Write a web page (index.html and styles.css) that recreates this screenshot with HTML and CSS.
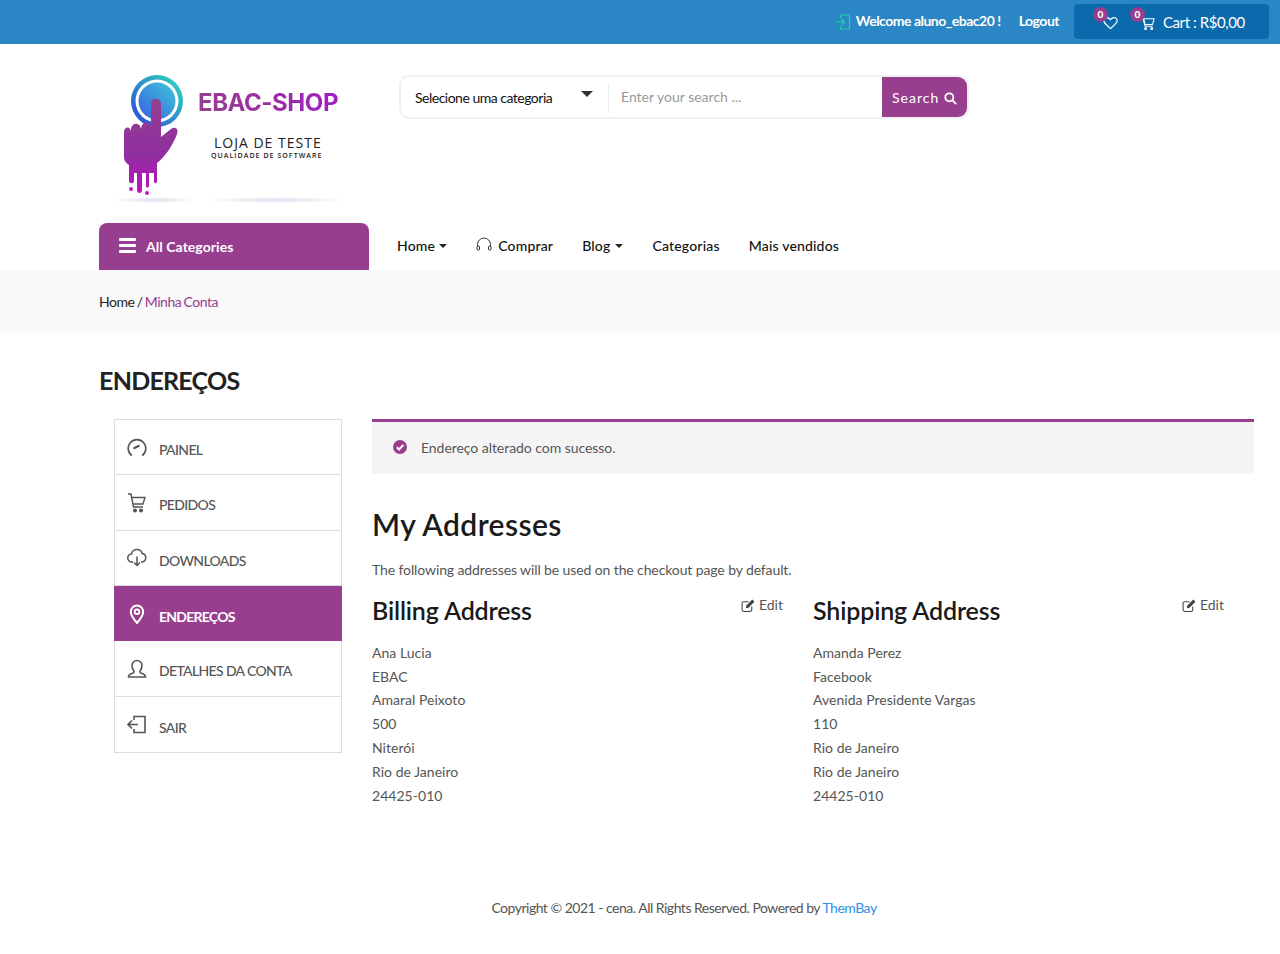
FILE: index.html
```html
<!DOCTYPE html>
<html lang="pt">

<head>
    <meta charset="utf-8">
    <title>Minha Conta - EBAC-SHOP</title>
    <link rel="stylesheet" href="styles.css">
</head>

<body>
    <div class="topbar">
        <svg class="welcome-icon" width="16" height="16" viewBox="0 0 16 16" fill="none" stroke="#1fd1a8" stroke-width="1.2">
            <path d="M5.5 4V1h9v14h-9v-3" />
            <path d="M1 8h8M6.5 5.2 9.500 8l-3 2.800" />
        </svg>
        <a class="welcome" href="#">Welcome aluno_ebac20 !</a>
        <a class="logout" href="#">Logout</a>
        <div class="cart-box">
            <div class="cart-item wish">
                <span class="count">0</span>
                <svg width="15" height="14" viewBox="0 0 15 14" fill="none" stroke="#fff" stroke-width="1.2">
                    <path d="M7.5 12.600 1.900 7.200C.3 5.600.6 3.200 2.200 2.100c1.600-1 3.600-.6 5.300 1.500 1.700-2.100 3.700-2.500 5.300-1.500 1.600 1.100 1.900 3.500.3 5.100z" />
                </svg>
            </div>
            <div class="cart-item">
                <span class="count">0</span>
                <svg width="15" height="15" viewBox="0 0 16 15" fill="none" stroke="#fff" stroke-width="1.1">
                    <path d="M15 2.500H4l1.400 6h8zM.5 1h2.300l2.600 9.500h8.100" />
                    <circle cx="6" cy="13" r="1" fill="#fff" />
                    <circle cx="12.500" cy="13" r="1" fill="#fff" />
                </svg>
            </div>
            <span class="cart-text">Cart : R$0,00</span>
        </div>
    </div>

    <div class="container">
        <div class="header">
            <div class="logo">
                <svg class="logo-mark" width="90" height="134" viewBox="0 0 90 134">
                    <defs>
                        <linearGradient id="ring" x1="0" y1="1" x2="1" y2="0">
                            <stop offset="0" stop-color="#2b3fe0" />
                            <stop offset="1" stop-color="#2fe0b8" />
                        </linearGradient>
                        <linearGradient id="disc" x1="0" y1="1" x2="1" y2="0">
                            <stop offset="0" stop-color="#3a5fe0" />
                            <stop offset="1" stop-color="#3cc8d8" />
                        </linearGradient>
                        <linearGradient id="hand" x1="0" y1="0" x2="0" y2="1">
                            <stop offset="0" stop-color="#973e8e" />
                            <stop offset="0.6" stop-color="#8f2fa0" />
                            <stop offset="1" stop-color="#c010c0" />
                        </linearGradient>
                    </defs>
                    <circle cx="58" cy="32" r="26" fill="url(#ring)" />
                    <circle cx="58" cy="32" r="21.500" fill="#fff" />
                    <circle cx="58" cy="32" r="18.500" fill="url(#disc)" />
                    <path fill="url(#hand)" d="M52 35C52 28 62 28 62 35L62 68 72 60C76 57 80 60 78 65 74 76 66 88 58 94L58 112C58 115 55 115 55 112L55 104 50 104 50 117C50 119 47 119 47 117L47 104 43 104 43 121C43 125 38 125 38 121L38 104 35 104 35 112C35 115 30 115 30 112L30 96C27 94 25 92 25 88L25 63C25 57 32 57 32 63L32 60C33 53 41 53 42 60 43 51 52 52 52 58Z" />
                    <circle cx="32" cy="120" r="2" fill="#c914bd" />
                    <circle cx="48" cy="124" r="2" fill="#c914bd" />
                </svg>
                <div class="logo-text">
                    <div class="logo-name">EBAC-SHOP</div>
                    <div class="logo-sub">LOJA DE TESTE</div>
                    <div class="logo-tag">QUALIDADE DE SOFTWARE</div>
                </div>
                <div class="shadow-a"></div>
                <div class="shadow-b"></div>
            </div>

            <div class="search">
                <div class="search-cat">
                    <span>Selecione uma categoria</span>
                    <i class="caret"></i>
                </div>
                <div class="search-input">Enter your search ...</div>
                <div class="search-btn">
                    Search
                    <svg width="13" height="13" viewBox="0 0 13 13" fill="none" stroke="#fff" stroke-width="1.800">
                        <circle cx="5.300" cy="5.300" r="4" />
                        <path d="M8.200 8.200 12.200 12.200" />
                    </svg>
                </div>
            </div>
        </div>

        <div class="navrow">
            <div class="all-cats">
                <div class="burger"><b></b><b></b><b></b></div>
                All Categories
            </div>
            <ul class="menu">
                <li class="first"><a href="#">Home</a><i class="caret-sm"></i></li>
                <li>
                    <svg class="head-icon" width="16" height="16" viewBox="0 0 16 16" fill="none" stroke="#222" stroke-width="0.9">
                        <path d="M1.500 9.500V7.500a6.500 6.500 0 0 1 13 0v2" />
                        <rect x="1" y="9" width="2.500" height="4" rx="1" />
                        <rect x="12.500" y="9" width="2.500" height="4" rx="1" />
                    </svg>
                    <a href="#">Comprar</a>
                </li>
                <li><a href="#">Blog</a><i class="caret-sm"></i></li>
                <li><a href="#">Categorias</a></li>
                <li><a href="#">Mais vendidos</a></li>
            </ul>
        </div>
    </div>

    <div class="crumbs">
        <div class="container">
            <a href="#">Home</a> / <span class="current">Minha Conta</span>
        </div>
    </div>

    <div class="container">
        <h1 class="page-title">ENDEREÇOS</h1>
    </div>

    <div class="account">
        <ul class="side">
            <li>
                <svg width="20" height="20" viewBox="0 0 20 20" fill="none" stroke="#555" stroke-width="1.600">
                    <path d="M4.800 17.500A8.800 8.800 0 1 1 15.200 17.500" />
                    <path d="M6.500 10.500 12.500 7.500" stroke-width="2" />
                </svg>
                <a href="#">PAINEL</a>
            </li>
            <li>
                <svg width="20" height="20" viewBox="0 0 20 20" fill="none" stroke="#555" stroke-width="1.400">
                    <path d="M1 1h3l2.500 13h9.500M5 4.500h13l-2 6.500H6.500" />
                    <circle cx="8" cy="17.500" r="1.300" fill="#555" />
                    <circle cx="14" cy="17.500" r="1.300" fill="#555" />
                </svg>
                <a href="#">PEDIDOS</a>
            </li>
            <li>
                <svg width="20" height="20" viewBox="0 0 20 20" fill="none" stroke="#555" stroke-width="1.500">
                    <path d="M6 14H5a4 4 0 0 1-.5-8 5.500 5.500 0 0 1 10.700-.5 4.300 4.300 0 0 1-.2 8.500h-1" />
                    <path d="M10 8.500v9M7 14.500l3 3 3-3" />
                </svg>
                <a href="#">DOWNLOADS</a>
            </li>
            <li class="active">
                <svg width="20" height="20" viewBox="0 0 20 20" fill="none" stroke="#fff" stroke-width="2">
                    <path d="M10 19C6 14.500 3.800 11.200 3.800 7.800a6.200 6.200 0 0 1 12.400 0C16.200 11.200 14 14.500 10 19z" />
                    <circle cx="10" cy="7.800" r="2.300" />
                </svg>
                <a href="#">ENDEREÇOS</a>
            </li>
            <li>
                <svg width="20" height="20" viewBox="0 0 20 20" fill="none" stroke="#555" stroke-width="1.600">
                    <path d="M7.200 12.500C5.600 10.500 5 8.500 5 6.500a5 5 0 0 1 10 0c0 2-.6 4-2.200 6 0 1 .5 1.500 2.200 2 2.500.7 3.500 1.500 3.500 3.500h-17c0-2 1-2.800 3.500-3.500 1.700-.5 2.200-1 2.200-2z" />
                </svg>
                <a href="#">DETALHES DA CONTA</a>
            </li>
            <li>
                <svg width="20" height="20" viewBox="0 0 20 20" fill="none" stroke="#555" stroke-width="1.600">
                    <path d="M7 5V1.500h11v16H7V14" />
                    <path d="M1 9.500h10M5 5.500l-4 4 4 4" />
                </svg>
                <a href="#">SAIR</a>
            </li>
        </ul>

        <div class="main">
            <div class="notice">
                <svg width="14" height="14" viewBox="0 0 14 14">
                    <circle cx="7" cy="7" r="7" fill="#973e8e" />
                    <path d="M3.800 7.200 6.100 9.500 10.300 5" fill="none" stroke="#fff" stroke-width="2" />
                </svg>
                <span>Endereço alterado com sucesso.</span>
            </div>

            <h2 class="main-title">My Addresses</h2>
            <p class="intro">The following addresses will be used on the checkout page by default.</p>

            <div class="addresses">
                <div class="address">
                    <div class="address-head">
                        <h3>Billing Address</h3>
                        <a class="edit" href="#">
                            <svg width="14" height="13" viewBox="0 0 13 12" fill="none" stroke="#444" stroke-width="1">
                                <path d="M10 7v3a1.500 1.500 0 0 1-1.500 1.500h-6A1.500 1.500 0 0 1 1 10V4a1.500 1.500 0 0 1 1.500-1.500H7" />
                                <path d="M4.500 8.500 5 6l5.500-5.500 2 2L7 8z" fill="#444" stroke="none" />
                            </svg>
                            Edit
                        </a>
                    </div>
                    <address>
                        Ana Lucia<br>EBAC<br>Amaral Peixoto<br>500<br>Niterói<br>Rio de Janeiro<br>24425-010
                    </address>
                </div>
                <div class="address">
                    <div class="address-head">
                        <h3>Shipping Address</h3>
                        <a class="edit" href="#">
                            <svg width="14" height="13" viewBox="0 0 13 12" fill="none" stroke="#444" stroke-width="1">
                                <path d="M10 7v3a1.500 1.500 0 0 1-1.500 1.500h-6A1.500 1.500 0 0 1 1 10V4a1.500 1.500 0 0 1 1.500-1.500H7" />
                                <path d="M4.500 8.500 5 6l5.500-5.500 2 2L7 8z" fill="#444" stroke="none" />
                            </svg>
                            Edit
                        </a>
                    </div>
                    <address>
                        Amanda Perez<br>Facebook<br>Avenida Presidente Vargas<br>110<br>Rio de Janeiro<br>Rio de Janeiro<br>24425-010
                    </address>
                </div>
            </div>
        </div>
    </div>

    <div class="footer">
        Copyright © 2021 - cena. All Rights Reserved. Powered by <a href="#">ThemBay</a>
    </div>
</body>

</html>
```

FILE: styles.css
```css
* {
    margin: 0;
    padding: 0;
    box-sizing: border-box;
}

body {
    font-family: Lato, "Liberation Sans", sans-serif;
    font-size: 14px;
    color: #555;
    background-color: #fff;
}

a {
    color: inherit;
    text-decoration: none;
}

ul {
    list-style: none;
}

.container {
    padding: 0 99px;
}

/* top bar */
.topbar {
    height: 44px;
    padding-right: 11px;
    background-color: #2b86c5;
    color: #fff;
    display: flex;
    align-items: center;
    justify-content: flex-end;
}

.welcome-icon {
    margin-right: 5px;
}

.welcome,
.logout {
    font-weight: 700;
    letter-spacing: -0.5px;
    line-height: 18px;
    margin-top: -2px;
}

.logout {
    margin-left: 18px;
}

.cart-box {
    width: 195px;
    height: 35px;
    margin-left: 15px;
    margin-top: -1px;
    padding-left: 29px;
    background-color: #0a6aab;
    border-radius: 4px;
    display: flex;
    align-items: center;
}

.cart-item {
    position: relative;
    display: flex;
    margin-right: 8px;
}

.cart-item.wish {
    margin-right: 22px;
}

.cart-item svg {
    margin-top: 3px;
}

.count {
    position: absolute;
    left: -10px;
    top: -6px;
    width: 15px;
    height: 15px;
    border-radius: 50%;
    background-color: #973e8e;
    font-size: 10px;
    font-weight: 900;
    line-height: 15px;
    text-align: center;
}

.cart-text {
    font-size: 15px;
    letter-spacing: -0.43px;
}

/* logo + search */
.header {
    height: 179px;
    display: flex;
    align-items: flex-start;
}

.logo {
    width: 300px;
    height: 179px;
    position: relative;
    display: flex;
}

.logo-mark {
    margin-top: 25px;
    margin-right: 9px;
    flex: none;
}

.logo-text {
    padding-top: 44px;
    color: #222;
}

.logo-name {
    font-family: Inter, "Liberation Sans", sans-serif;
    font-size: 24px;
    font-weight: 700;
    line-height: 30px;
    letter-spacing: -0.45px;
    white-space: nowrap;
    background: linear-gradient(90deg, #973e8e, #a01fc0);
    -webkit-background-clip: text;
    background-clip: text;
    color: transparent;
}

.logo-sub {
    margin-top: 18px;
    margin-left: 16px;
    font-family: "Open Sans", sans-serif;
    font-size: 14px;
    line-height: 14px;
    letter-spacing: 1px;
    white-space: nowrap;
}

.logo-tag {
    margin-top: 1px;
    margin-left: 13px;
    font-family: "Open Sans", sans-serif;
    font-size: 7px;
    font-weight: 600;
    letter-spacing: 1.05px;
    white-space: nowrap;
    line-height: 10px;
}

.shadow-a,
.shadow-b {
    position: absolute;
    top: 153px;
    height: 6px;
    border-radius: 50%;
    background: radial-gradient(#dcdcec, #fff 70%);
}

.shadow-a {
    left: 12px;
    width: 84px;
}

.shadow-b {
    left: 105px;
    width: 144px;
}

.search {
    width: 570px;
    height: 44px;
    margin-top: 31px;
    border: 2px solid #f0f0f0;
    border-radius: 10px;
    display: flex;
    background-color: #fff;
}

.search-cat {
    width: 208px;
    padding-left: 14px;
    color: #111;
    font-size: 14px;
    letter-spacing: -0.5px;
    line-height: 41px;
    position: relative;
}

.search-cat::after {
    content: "";
    position: absolute;
    right: 0;
    top: 6px;
    height: 30px;
    border-right: 1px solid #eee;
}

.caret {
    position: absolute;
    left: 180px;
    top: 14px;
    border-style: solid;
    border-width: 6px 6px 0;
    border-color: #333 transparent transparent;
}

.search-input {
    flex: 1;
    padding-left: 12px;
    color: #999;
    line-height: 39px;
}

.search-btn {
    width: 85px;
    height: 40px;
    padding-left: 10px;
    background-color: #973e8e;
    border-radius: 0 9px 9px 0;
    color: #fff;
    letter-spacing: 1px;
    line-height: 37px;
    display: flex;
    align-items: center;
    gap: 5px;
}

.search-btn svg {
    margin-top: 2px;
}

/* nav */
.navrow {
    height: 47px;
    display: flex;
}

.all-cats {
    width: 270px;
    padding-left: 20px;
    background-color: #973e8e;
    border-radius: 8px 8px 0 0;
    color: #fff;
    font-weight: 700;
    letter-spacing: 0.05px;
    display: flex;
    align-items: center;
    gap: 10px;
}

.burger {
    width: 17px;
    display: flex;
    flex-direction: column;
    gap: 3px;
    margin-top: -2px;
}

.burger b {
    height: 3px;
    background-color: #fff;
    border-radius: 1px;
}

.menu {
    margin-left: 28px;
    margin-top: -3px;
    display: flex;
    align-items: center;
    gap: 29px;
    color: #111;
    font-size: 14px;
    font-weight: 500;
    letter-spacing: 0.18px;
}

.menu li {
    display: flex;
    align-items: center;
}

.menu .first .caret-sm {
    margin-left: 4px;
}

.head-icon {
    margin-right: 6px;
}

.caret-sm {
    margin-left: 5px;
    margin-top: 2px;
    border-style: solid;
    border-width: 4px 4px 0;
    border-color: #222 transparent transparent;
}

/* breadcrumb */
.crumbs {
    height: 63px;
    background-color: #f9f9f9;
    color: #222;
    line-height: 63px;
    letter-spacing: -0.45px;
    word-spacing: -1px;
}

.crumbs .current {
    color: #973e8e;
}

.page-title {
    margin-top: 33px;
    height: 53px;
    color: #222;
    font-size: 25px;
    font-weight: 700;
    line-height: 28px;
    letter-spacing: -0.75px;
}

/* account area */
.account {
    padding-left: 114px;
    padding-right: 26px;
    display: flex;
    align-items: flex-start;
}

.side {
    width: 228px;
    flex: none;
    margin-right: 30px;
    border: 1px solid #ddd;
}

.side li {
    height: 55.400px;
    padding: 4.800px 0 0 12px;
    border-bottom: 1px solid #ddd;
    display: flex;
    align-items: center;
    color: #555;
    font-weight: 500;
    letter-spacing: -0.65px;
}

.side li:last-child {
    border-bottom: 0;
}

.side svg {
    margin-right: 12px;
    margin-top: -4px;
    flex: none;
}

.side .active {
    height: 55px;
    background-color: #973e8e;
    border-bottom: 0;
    margin: 0 -1px;
    padding-left: 13px;
    color: #fff;
    font-weight: 700;
    letter-spacing: -0.75px;
}

.side .active + li {
    height: 55.800px;
}

.main {
    flex: 1;
}

.notice {
    height: 55px;
    padding: 0 0 2px 21px;
    background-color: #f5f5f5;
    border-top: 3px solid #973e8e;
    display: flex;
    align-items: center;
    gap: 14px;
    font-size: 14px;
    letter-spacing: -0.05px;
}

.main-title {
    margin-top: 32px;
    color: #1a1a1a;
    font-size: 30px;
    font-weight: 600;
    line-height: 36px;
    letter-spacing: 0.4px;
}

.intro {
    margin-top: 16px;
    letter-spacing: -0.11px;
    line-height: 24px;
}

.addresses {
    display: flex;
    gap: 30px;
}

.address {
    width: 411px;
}

.address-head {
    display: flex;
    justify-content: space-between;
    align-items: flex-start;
    height: 58.800px;
    padding-top: 10px;
}

.address-head h3 {
    color: #1a1a1a;
    font-size: 25px;
    font-weight: 600;
    line-height: 36px;
    letter-spacing: -0.15px;
}

.edit {
    display: flex;
    align-items: center;
    gap: 4px;
    margin-top: 1px;
    line-height: 24px;
    color: #555;
}

address {
    font-style: normal;
    line-height: 23.800px;
    font-size: 14px;
    letter-spacing: 0.03px;
}

.footer {
    margin-top: 88.500px;
    padding-left: 88px;
    text-align: center;
    letter-spacing: -0.5px;
    line-height: 24px;
}

.footer a {
    color: #2a90ee;
}
```
